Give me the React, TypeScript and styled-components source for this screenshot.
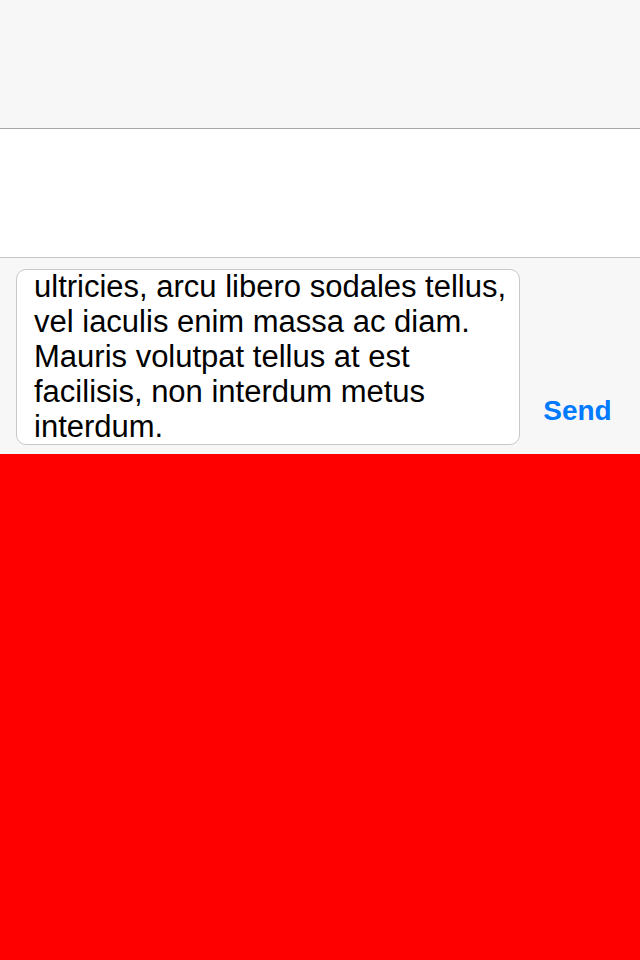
import React from 'react'
import styled, {createGlobalStyle} from 'styled-components'

const Global = createGlobalStyle`
    html, body {
        margin: 0;
        padding: 0;
        background: #ff0000;
        font-family: "Liberation Sans", Arial, sans-serif;
    }
`

const lines = [
    'ultricies, arcu libero sodales tellus,',
    'vel iaculis enim massa ac diam.',
    'Mauris volutpat tellus at est',
    'facilisis, non interdum metus',
    'interdum.',
]

export default function App () {
    return (
        <Screen>
            <Global />
            <NavBar />
            <Content />
            <InputBar>
                <TextBox>
                    {lines.map(l => <Line key={l}>{l}</Line>)}
                </TextBox>
                <SendButton>Send</SendButton>
            </InputBar>
            <Keyboard />
        </Screen>
    )
}

const Screen = styled.div`
    width: 640px;
    height: 960px;
    display: flex;
    flex-direction: column;
    background: #ff0000;
`

const NavBar = styled.header`
    height: 128px;
    background: #f7f7f7;
    border-bottom: 1px solid #a7a7a7;
    flex: none;
`

const Content = styled.main`
    height: 128px;
    background: #ffffff;
    border-bottom: 1px solid #c4c4c4;
    flex: none;
`

const InputBar = styled.div`
    height: 196px;
    box-sizing: border-box;
    background: #f7f7f7;
    padding: 10px 0 9px 16px;
    display: flex;
    align-items: flex-end;
    flex: none;
`

const TextBox = styled.div`
    width: 504px;
    height: 176px;
    box-sizing: border-box;
    background: #ffffff;
    border: 1px solid #c8c8cc;
    border-radius: 10px;
    overflow: hidden;
    display: flex;
    flex-direction: column;
    justify-content: flex-end;
    padding: 0 0 0 17px;
`

const Line = styled.div`
    font-size: 31px;
    line-height: 35px;
    color: #000;
    white-space: nowrap;
    flex: none;
`

const SendButton = styled.button`
    flex: 1;
    border: none;
    background: none;
    padding: 0 5px 20px 0;
    font-family: "Liberation Sans", Arial, sans-serif;
    font-weight: bold;
    font-size: 28px;
    color: #007aff;
    text-align: center;
    line-height: 1;
`

const Keyboard = styled.div`
    flex: 1;
    background: #ff0000;
`
